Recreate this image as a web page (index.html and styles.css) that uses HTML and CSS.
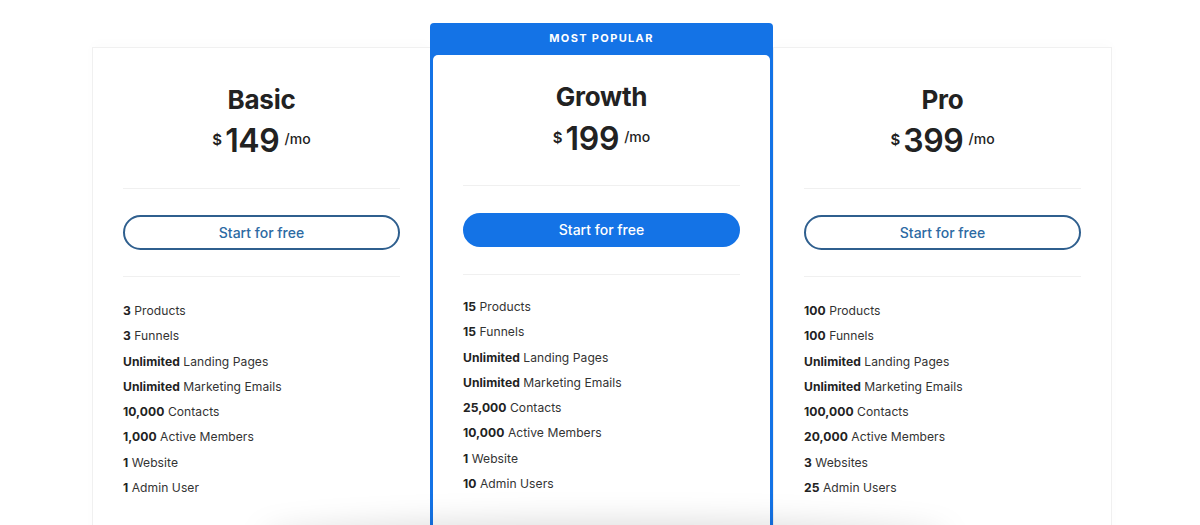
FILE: index.html
```html
<!DOCTYPE html>
<html lang="en">
<head>
    <meta charset="UTF-8">
    <meta name="viewport" content="width=device-width, initial-scale=1.0">
    <title>Pricing</title>
    <link rel="stylesheet" href="styles.css">
</head>
<body>

<!-- Pricing table -->
<div class="pricing">

    <div class="plan">
        <h2 class="plan-name">Basic</h2>
        <div class="price"><span class="currency">$</span><span class="amount">149</span><span class="per">/mo</span></div>
        <hr class="divider">
        <a href="#" class="btn btn-outline">Start for free</a>
        <hr class="divider">
        <ul class="features">
            <li><b>3</b> Products</li>
            <li><b>3</b> Funnels</li>
            <li><b>Unlimited</b> Landing Pages</li>
            <li><b>Unlimited</b> Marketing Emails</li>
            <li><b>10,000</b> Contacts</li>
            <li><b>1,000</b> Active Members</li>
            <li><b>1</b> Website</li>
            <li><b>1</b> Admin User</li>
        </ul>
    </div>

    <div class="featured">
        <div class="featured-label">MOST POPULAR</div>
        <div class="plan plan-featured">
            <h2 class="plan-name">Growth</h2>
            <div class="price"><span class="currency">$</span><span class="amount">199</span><span class="per">/mo</span></div>
            <hr class="divider">
            <a href="#" class="btn btn-solid">Start for free</a>
            <hr class="divider">
            <ul class="features">
                <li><b>15</b> Products</li>
                <li><b>15</b> Funnels</li>
                <li><b>Unlimited</b> Landing Pages</li>
                <li><b>Unlimited</b> Marketing Emails</li>
                <li><b>25,000</b> Contacts</li>
                <li><b>10,000</b> Active Members</li>
                <li><b>1</b> Website</li>
                <li><b>10</b> Admin Users</li>
            </ul>
        </div>
    </div>

    <div class="plan">
        <h2 class="plan-name">Pro</h2>
        <div class="price"><span class="currency">$</span><span class="amount">399</span><span class="per">/mo</span></div>
        <hr class="divider">
        <a href="#" class="btn btn-outline">Start for free</a>
        <hr class="divider">
        <ul class="features">
            <li><b>100</b> Products</li>
            <li><b>100</b> Funnels</li>
            <li><b>Unlimited</b> Landing Pages</li>
            <li><b>Unlimited</b> Marketing Emails</li>
            <li><b>100,000</b> Contacts</li>
            <li><b>20,000</b> Active Members</li>
            <li><b>3</b> Websites</li>
            <li><b>25</b> Admin Users</li>
        </ul>
    </div>

</div>

<!-- soft shadow along the bottom edge -->
<div class="bottom-shade"></div>

</body>
</html>
```

FILE: styles.css
```css
/* Basic Reset */
body, h2, ul, li, hr {
    margin: 0;
    padding: 0;
}

body {
    background: #ffffff;
    font-family: 'Inter', 'Noto Sans', sans-serif;
    color: #222;
    height: 525px;
    overflow: hidden;
    position: relative;
}

/* Pricing Row */
.pricing {
    display: flex;
    align-items: flex-start;
    padding-left: 92px;
}

.plan {
    box-sizing: border-box;
    width: 339px;
    height: 520px;
    margin-top: 47px;
    padding: 36px 30px 0;
    background: white;
    border: 1px solid #f0f0f0;
    text-align: center;
    box-shadow: 0 -4px 12px rgba(0, 0, 0, 0.015);
}

.plan-name {
    font-size: 26px;
    line-height: 32px;
    font-weight: 700;
    letter-spacing: -0.2px;
    color: #222;
}

.price {
    display: flex;
    justify-content: center;
    align-items: center;
    height: 40px;
    margin-top: 4px;
}

.currency {
    font-size: 15px;
    font-weight: 600;
    margin-right: 3px;
    margin-top: -2px;
}

.amount {
    font-size: 32px;
    font-weight: 600;
    letter-spacing: -0.3px;
}

.per {
    font-size: 14px;
    font-weight: 500;
    margin-left: 5px;
    margin-top: -3px;
}

.divider {
    border: 0;
    border-top: 1px solid #f0f0f0;
    margin: 28px 0 26px;
}

.divider + .btn {
    margin-bottom: 26px;
}

.btn + .divider {
    margin: 0;
}

/* Buttons */
.btn {
    display: block;
    box-sizing: border-box;
    height: 35px;
    line-height: 31px;
    border-radius: 18px;
    font-size: 14px;
    font-weight: 500;
    text-decoration: none;
}

.btn-outline {
    border: 2px solid #2f5f8e;
    color: #2d6aa3;
}

.btn-solid {
    border: 2px solid #1473e6;
    background: #1473e6;
    color: white;
    height: 34px;
    line-height: 30px;
}

/* Feature List */
.features {
    list-style: none;
    text-align: left;
    margin-top: 21px;
    font-size: 12.1px;
    letter-spacing: 0.05px;
    color: #333;
}

.features li {
    line-height: 25.3px;
}

.features b {
    font-weight: 700;
    color: #222;
}

/* Most Popular Column */
.featured {
    box-sizing: border-box;
    width: 343px;
    margin-top: 23px;
    margin-left: -1px;
    background: #1473e6;
    border-radius: 4px 4px 0 0;
    padding: 0 3px;
    position: relative;
    z-index: 1;
}

.featured-label {
    height: 32px;
    line-height: 31px;
    text-align: center;
    color: white;
    font-size: 11px;
    font-weight: 700;
    letter-spacing: 1.35px;
}

.plan-featured {
    width: 337px;
    margin-top: 0;
    padding-top: 26px;
    padding-left: 30px;
    padding-right: 30px;
    border: 0;
    border-radius: 5px 5px 0 0;
    box-shadow: none;
}

.plan-featured .price {
    margin-top: 5px;
}

.plan-featured .divider {
    margin-top: 27px;
    margin-bottom: 27px;
}

.plan-featured .divider + .btn {
    margin-bottom: 24px;
}

.plan-featured .btn + .divider {
    margin-bottom: 0;
}

.plan-featured .features {
    margin-top: 19px;
}

.bottom-shade {
    position: absolute;
    left: 260px;
    right: 250px;
    bottom: -30px;
    height: 36px;
    background: rgba(0, 0, 0, 0.12);
    filter: blur(14px);
    border-radius: 50%;
    z-index: 2;
}
```
